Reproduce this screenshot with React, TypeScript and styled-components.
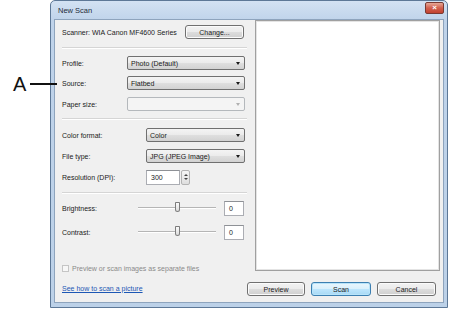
import styled, { createGlobalStyle } from "styled-components";

const GlobalStyle = createGlobalStyle`
    html, body {
        margin: 0;
        padding: 0;
        background: #ffffff;
    }
    body {
        width: 450px;
        height: 310px;
        overflow: hidden;
        font-family: "Liberation Sans", Arial, sans-serif;
    }
`;

const Page = styled.div`
    position: relative;
    width: 450px;
    height: 310px;
    padding-left: 50px;
    box-sizing: border-box;
`;

const Callout = styled.div`
    position: absolute;
    left: 13px;
    top: 74px;
    display: flex;
    align-items: center;
    gap: 4px;
    z-index: 2;
`;

const CalloutLetter = styled.span`
    font-family: "Liberation Sans", Arial, sans-serif;
    font-size: 20px;
    line-height: 20px;
    color: #111;
`;

const CalloutLine = styled.span`
    width: 27px;
    height: 1.5px;
    background: #111;
`;

const Window = styled.div`
    width: 398px;
    height: 308px;
    box-sizing: border-box;
    border: 1px solid #5d7897;
    border-radius: 5px 5px 0 0;
    background: linear-gradient(#d3e2f3, #bfd3ea 20px, #bcd1e8);
    display: flex;
    flex-direction: column;
    padding: 0 3px 4px 3px;
`;

const TitleBar = styled.div`
    height: 18px;
    display: flex;
    align-items: center;
    justify-content: space-between;
    padding-left: 4px;
    font-size: 7.5px;
    color: #1e2b3a;
`;

const CloseButton = styled.div`
    width: 17px;
    height: 10px;
    margin-right: 0;
    margin-top: -4px;
    border: 1px solid #7a3a33;
    border-radius: 2px;
    background: linear-gradient(#e6a796, #d2604f 50%, #c2422f);
    display: flex;
    align-items: center;
    justify-content: center;
    color: #fff;
    font-size: 8px;
    font-weight: bold;
    line-height: 1;
`;

const Client = styled.div`
    flex: 1;
    background: #f0f0f0;
    border: 1px solid #8ea4bd;
    display: grid;
    grid-template-columns: 197px 1fr;
    font-size: 7px;
    color: #1a1a1a;
`;

const LeftPanel = styled.div`
    display: flex;
    flex-direction: column;
    padding: 5px 5px 6px 7px;
`;

const RightPanel = styled.div`
    display: flex;
    flex-direction: column;
    padding: 0 3px 6px 3px;
`;

const Row = styled.div<{ $gap?: number }>`
    display: flex;
    align-items: center;
    height: 14px;
    margin-top: ${(p) => p.$gap ?? 0}px;
`;

const Label = styled.span<{ $w: number; $muted?: boolean }>`
    width: ${(p) => p.$w}px;
    flex-shrink: 0;
    color: ${(p) => (p.$muted ? "#8a8a8a" : "#1a1a1a")};
    white-space: nowrap;
`;

const Separator = styled.div<{ $top: number; $bottom: number }>`
    height: 1px;
    background: #d5d5d5;
    border-bottom: 1px solid #ffffff;
    margin: ${(p) => p.$top}px 0 ${(p) => p.$bottom}px 0;
`;

const Button = styled.div<{ $w: number; $default?: boolean }>`
    width: ${(p) => p.$w}px;
    height: 14px;
    flex-shrink: 0;
    box-sizing: border-box;
    border: 1px solid ${(p) => (p.$default ? "#3c7fb1" : "#707070")};
    border-radius: 3px;
    background: ${(p) =>
        p.$default
            ? "linear-gradient(#eaf6fd, #d9f0fc 50%, #bee6fd 50%, #a7d9f5)"
            : "linear-gradient(#f2f2f2, #ebebeb 50%, #dddddd 50%, #cfcfcf)"};
    box-shadow: inset 0 0 0 1px ${(p) => (p.$default ? "#b8e4fa" : "#fbfbfb")};
    display: flex;
    align-items: center;
    justify-content: center;
    font-size: 7px;
    color: #1a1a1a;
`;

const Select = styled.div<{ $w: number; $disabled?: boolean }>`
    width: ${(p) => p.$w}px;
    height: 14px;
    box-sizing: border-box;
    border: 1px solid ${(p) => (p.$disabled ? "#b4b8bc" : "#707070")};
    border-radius: 2px;
    background: ${(p) =>
        p.$disabled
            ? "#f4f4f4"
            : "linear-gradient(#f4f4f4, #ebebeb 50%, #dfdfdf 50%, #d2d2d2)"};
    display: flex;
    align-items: center;
    justify-content: space-between;
    padding: 0 4px 0 3px;
    color: #1a1a1a;
`;

const Arrow = styled.span<{ $disabled?: boolean }>`
    width: 0;
    height: 0;
    border-left: 2.5px solid transparent;
    border-right: 2.5px solid transparent;
    border-top: 3px solid ${(p) => (p.$disabled ? "#b0b0b0" : "#1a1a1a")};
`;

const TextBox = styled.div<{ $w: number }>`
    width: ${(p) => p.$w}px;
    height: 15px;
    box-sizing: border-box;
    border: 1px solid #abadb3;
    border-top-color: #8e9196;
    background: #ffffff;
    display: flex;
    align-items: center;
    padding-left: 4px;
`;

const Spinner = styled.div`
    width: 9px;
    height: 15px;
    box-sizing: border-box;
    margin-left: 1px;
    border: 1px solid #b3b3b3;
    border-radius: 2px;
    background: linear-gradient(#f6f6f6, #dedede);
    display: flex;
    flex-direction: column;
    align-items: center;
    justify-content: space-around;
    padding: 2px 0;
`;

const SpinArrow = styled.span<{ $up?: boolean }>`
    width: 0;
    height: 0;
    border-left: 2px solid transparent;
    border-right: 2px solid transparent;
    ${(p) => (p.$up ? "border-bottom: 2px solid #444;" : "border-top: 2px solid #444;")}
`;

const Slider = styled.div`
    position: relative;
    width: 78px;
    height: 14px;
    margin-left: 1px;
    display: flex;
    align-items: center;
`;

const Track = styled.div`
    width: 100%;
    height: 1px;
    background: #b5b5b5;
    border-bottom: 1px solid #ffffff;
`;

const Thumb = styled.div`
    position: absolute;
    left: 37px;
    top: 1px;
    width: 5px;
    height: 10px;
    box-sizing: border-box;
    border: 1px solid #7d7d7d;
    border-radius: 1px 1px 3px 3px;
    background: linear-gradient(#fbfbfb, #dcdcdc);
`;

const ValueGap = styled.span`
    width: 8px;
    flex-shrink: 0;
`;

const Checkbox = styled.span`
    width: 7px;
    height: 7px;
    box-sizing: border-box;
    border: 1px solid #c5c5c5;
    background: #f7f7f7;
    margin-right: 3px;
`;

const LinkText = styled.span`
    color: #1c57b5;
    text-decoration: underline;
`;

const Preview = styled.div`
    flex: 1;
    background: #ffffff;
    border: 1px solid #a0a0a0;
    box-shadow: inset 0 0 0 1px #e4e4e4;
    margin-top: 0;
    margin-bottom: 1px;
`;

const ButtonBar = styled.div`
    display: flex;
    align-items: center;
    margin: 10px 0 0 -8px;
    gap: 6px;
`;

export default function App() {
    return (
        <>
            <GlobalStyle />
            <Page>
                <Callout>
                    <CalloutLetter>A</CalloutLetter>
                    <CalloutLine />
                </Callout>
                <Window>
                    <TitleBar>
                        <span>New Scan</span>
                        <CloseButton>×</CloseButton>
                    </TitleBar>
                    <Client>
                        <LeftPanel>
                            <Row>
                                <Label $w={123}>Scanner: WIA Canon MF4600 Series</Label>
                                <Button $w={59}>Change...</Button>
                            </Row>
                            <Separator $top={8} $bottom={7} />
                            <Row>
                                <Label $w={65}>Profile:</Label>
                                <Select $w={118}>
                                    Photo (Default)
                                    <Arrow />
                                </Select>
                            </Row>
                            <Row $gap={6}>
                                <Label $w={65}>Source:</Label>
                                <Select $w={118}>
                                    Flatbed
                                    <Arrow />
                                </Select>
                            </Row>
                            <Row $gap={7}>
                                <Label $w={65}>Paper size:</Label>
                                <Select $w={118} $disabled>
                                    <span />
                                    <Arrow $disabled />
                                </Select>
                            </Row>
                            <Separator $top={7} $bottom={8} />
                            <Row>
                                <Label $w={84}>Color format:</Label>
                                <Select $w={99}>
                                    Color
                                    <Arrow />
                                </Select>
                            </Row>
                            <Row $gap={7}>
                                <Label $w={84}>File type:</Label>
                                <Select $w={99}>
                                    JPG (JPEG Image)
                                    <Arrow />
                                </Select>
                            </Row>
                            <Row $gap={7}>
                                <Label $w={84}>Resolution (DPI):</Label>
                                <TextBox $w={34}>300</TextBox>
                                <Spinner>
                                    <SpinArrow $up />
                                    <SpinArrow />
                                </Spinner>
                            </Row>
                            <Separator $top={8} $bottom={7} />
                            <Row>
                                <Label $w={75}>Brightness:</Label>
                                <Slider>
                                    <Track />
                                    <Thumb />
                                </Slider>
                                <ValueGap />
                                <TextBox $w={20}>0</TextBox>
                            </Row>
                            <Row $gap={10}>
                                <Label $w={75}>Contrast:</Label>
                                <Slider>
                                    <Track />
                                    <Thumb />
                                </Slider>
                                <ValueGap />
                                <TextBox $w={20}>0</TextBox>
                            </Row>
                            <Row $gap={22}>
                                <Checkbox />
                                <Label $w={160} $muted>Preview or scan images as separate files</Label>
                            </Row>
                            <Row $gap={6}>
                                <LinkText>See how to scan a picture</LinkText>
                            </Row>
                        </LeftPanel>
                        <RightPanel>
                            <Preview />
                            <ButtonBar>
                                <Button $w={58}>Preview</Button>
                                <Button $w={60} $default>Scan</Button>
                                <Button $w={59}>Cancel</Button>
                            </ButtonBar>
                        </RightPanel>
                    </Client>
                </Window>
            </Page>
        </>
    );
}
